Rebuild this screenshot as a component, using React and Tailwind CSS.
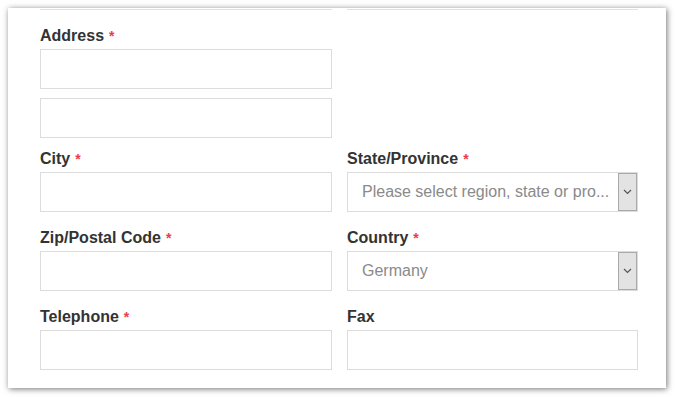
import React from 'react';

const font = { fontFamily: '"Liberation Sans", Arial, sans-serif' };

function Label({ text, required }) {
    return (
        <div className="h-[21px] pt-px leading-5 mb-[3px] text-[16px] font-bold text-[#333]">
            {text}
            {required && <span className="ml-[5px] text-[14px] text-[#ea3c4a] align-top">*</span>}
        </div>
    );
}

function Input() {
    return <div className="h-10 w-full border border-[#dcdcdc] bg-white" />;
}

function Select({ value }) {
    return (
        <div className="h-10 w-full flex border border-[#dcdcdc] bg-white">
            <div className="flex-1 pl-[14px] flex items-center text-[16px] text-[#8a8a8a] overflow-hidden whitespace-nowrap">
                {value}
            </div>
            <div className="w-[19px] h-full bg-[#e3e3e3] border border-[#a9a9a9] flex items-center justify-center">
                <svg width="9" height="6" viewBox="0 0 9 6">
                    <path d="M1 1l3.5 3.5L8 1" fill="none" stroke="#555" strokeWidth="1.2" />
                </svg>
            </div>
        </div>
    );
}

export default function App() {
    return (
        <div className="w-[675px] h-[397px] bg-white pt-2 pl-2" style={font}>
            <div className="w-[658px] h-[380px] bg-white shadow-[1px_1px_6px_rgba(0,0,0,0.55)] pl-8 pr-7 pt-px">
                {/* bottoms of the fields above, cut off */}
                <div className="grid grid-cols-[292px_291px] gap-[15px]">
                    <div className="h-px bg-[#e2e2e2]" />
                    <div className="h-px bg-[#e2e2e2]" />
                </div>

                <div className="mt-[15px] w-[292px]">
                    <Label text="Address" required />
                    <Input />
                    <div className="mt-[9px]">
                        <Input />
                    </div>
                </div>

                <div className="mt-[10px] grid grid-cols-[292px_291px] gap-x-[15px]">
                    <div>
                        <Label text="City" required />
                        <Input />
                    </div>
                    <div>
                        <Label text="State/Province" required />
                        <Select value="Please select region, state or pro..." />
                    </div>
                </div>

                <div className="mt-[15px] grid grid-cols-[292px_291px] gap-x-[15px]">
                    <div>
                        <Label text="Zip/Postal Code" required />
                        <Input />
                    </div>
                    <div>
                        <Label text="Country" required />
                        <Select value="Germany" />
                    </div>
                </div>

                <div className="mt-[15px] grid grid-cols-[292px_291px] gap-x-[15px]">
                    <div>
                        <Label text="Telephone" required />
                        <Input />
                    </div>
                    <div>
                        <Label text="Fax" />
                        <Input />
                    </div>
                </div>
            </div>
        </div>
    );
}
